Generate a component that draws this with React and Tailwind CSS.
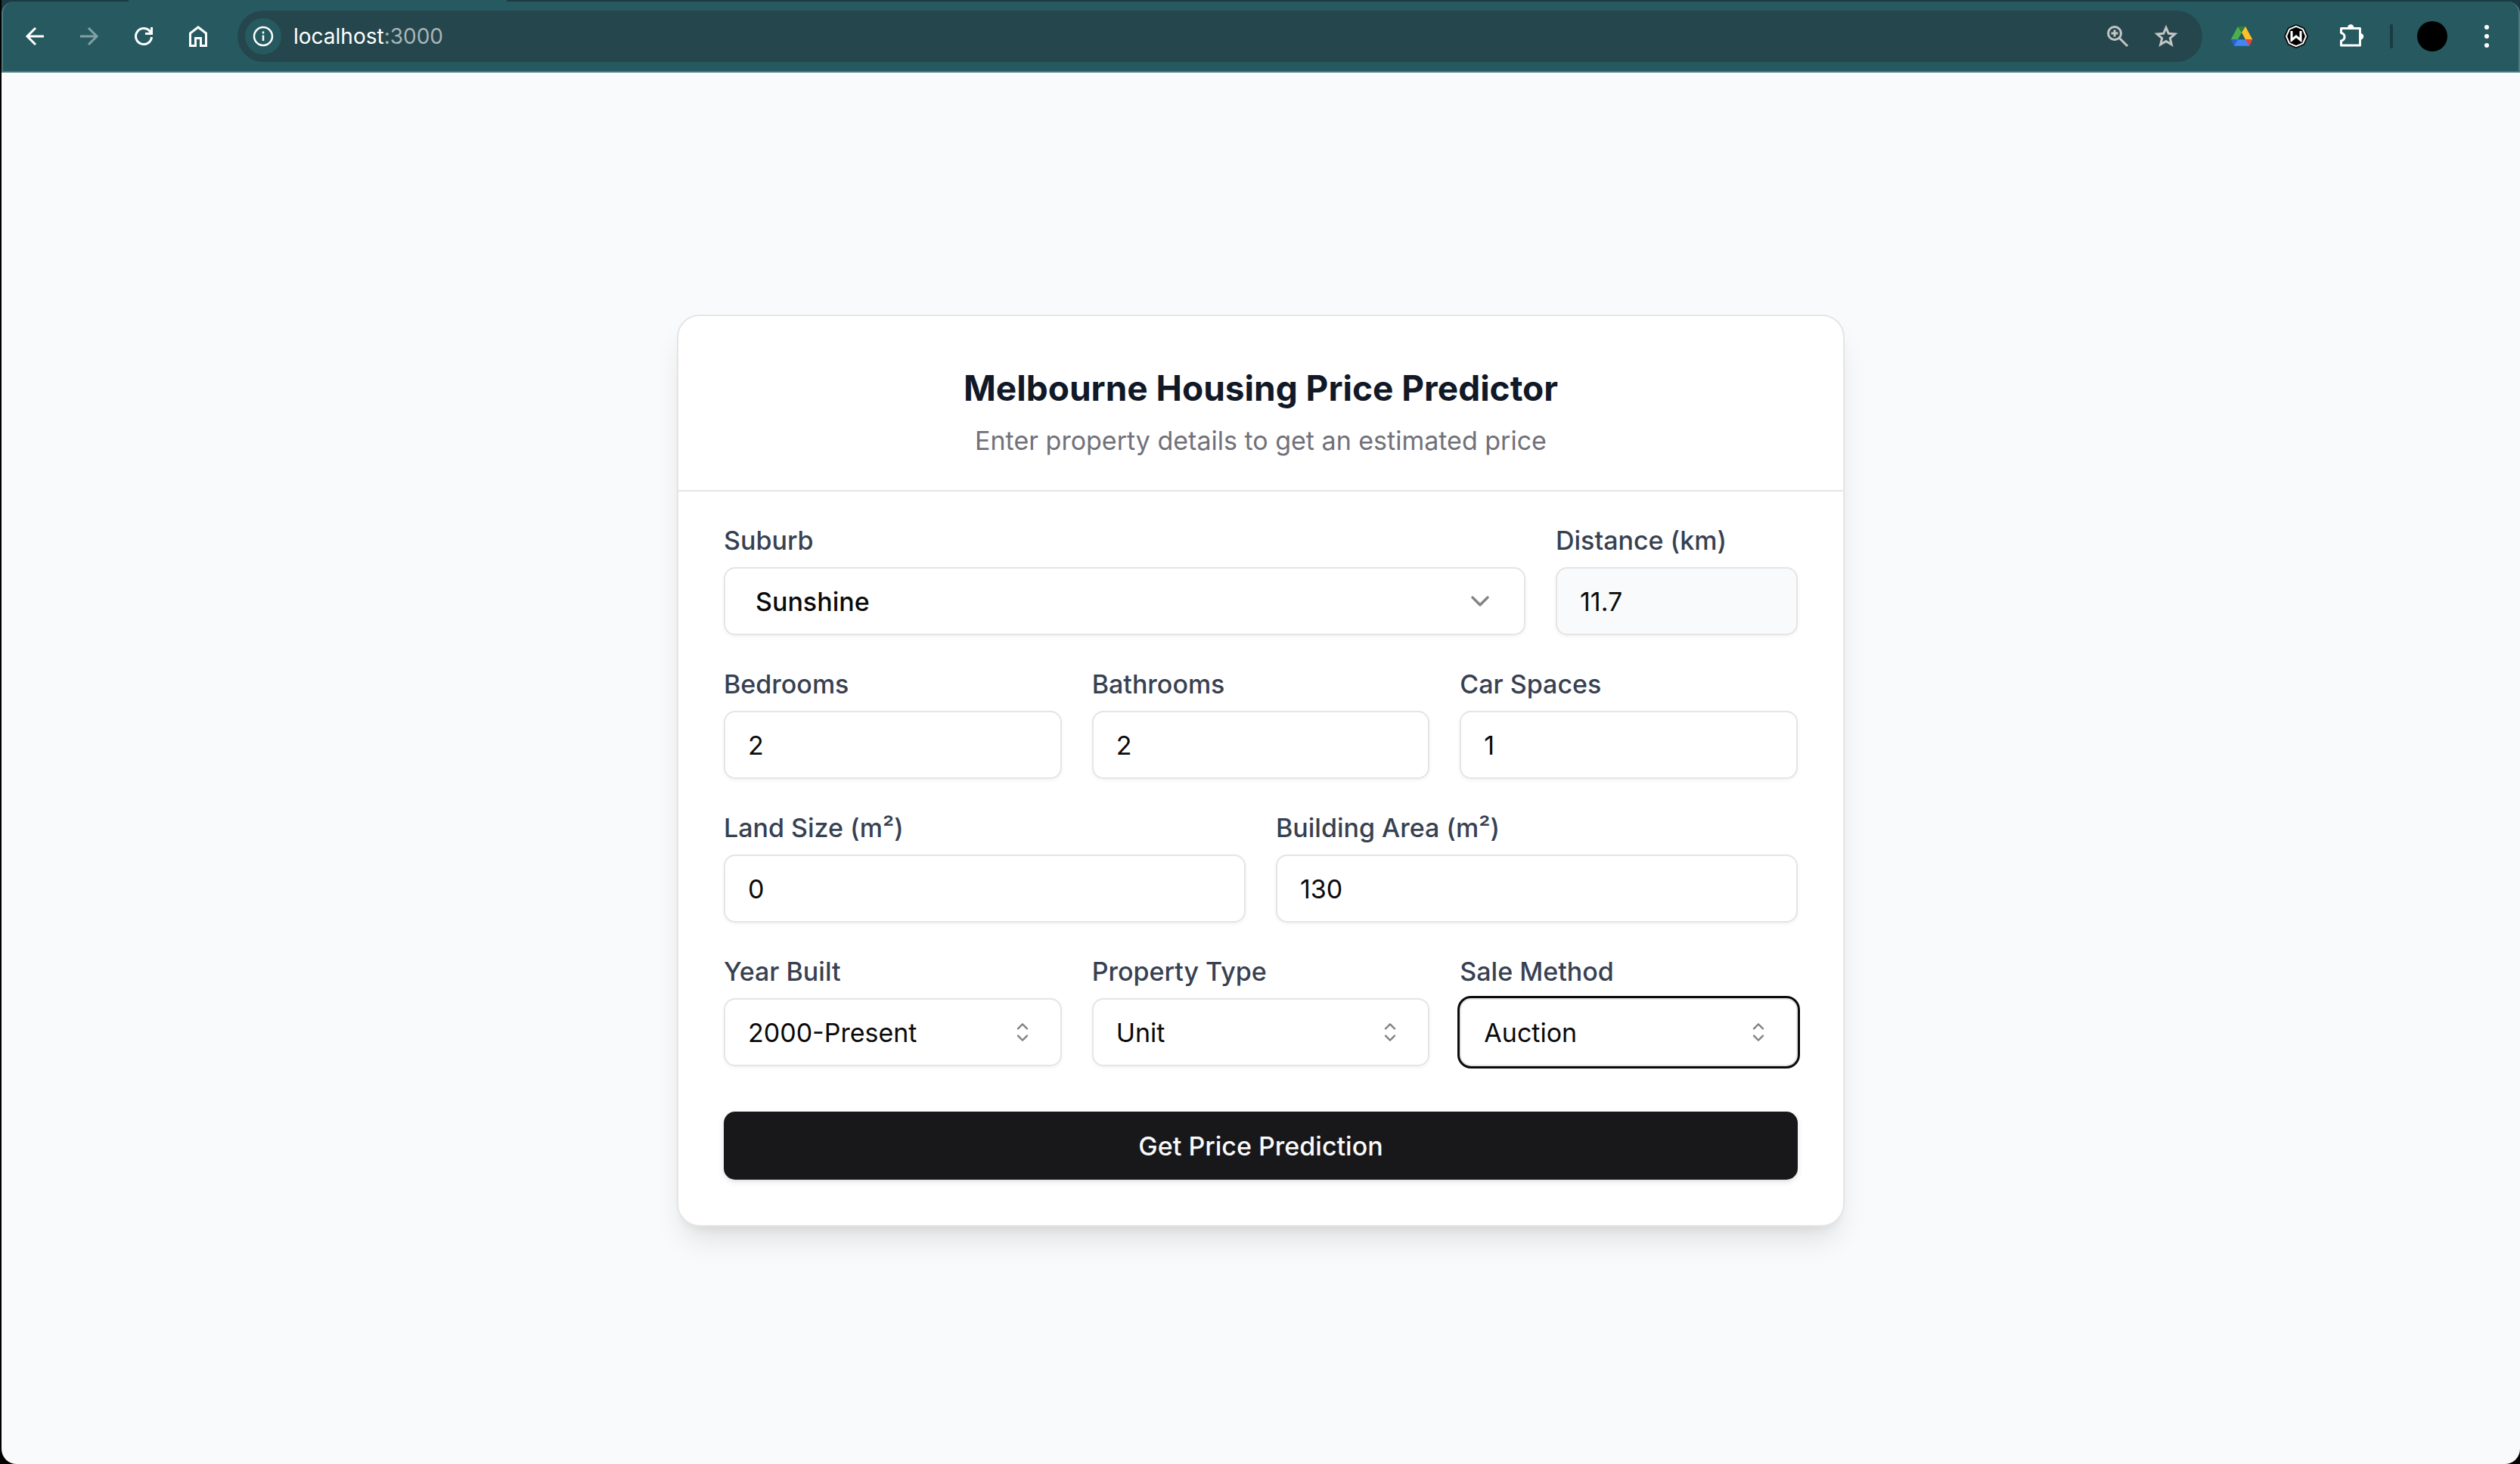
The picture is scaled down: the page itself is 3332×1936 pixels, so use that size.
import React from "react";
import { ChevronDown } from "lucide-react";

const caretPath =
  "M4.93179 5.43179C4.75605 5.60753 4.75605 5.89245 4.93179 6.06819C5.10753 6.24392 5.39245 6.24392 5.56819 6.06819L7.49999 4.13638L9.43179 6.06819C9.60753 6.24392 9.89245 6.24392 10.0682 6.06819C10.2439 5.89245 10.2439 5.60753 10.0682 5.43179L7.81819 3.18179C7.73379 3.0974 7.61933 3.04999 7.49999 3.04999C7.38064 3.04999 7.26618 3.0974 7.18179 3.18179L4.93179 5.43179ZM10.0682 9.56819C10.2439 9.39245 10.2439 9.10753 10.0682 8.93179C9.89245 8.75606 9.60753 8.75606 9.43179 8.93179L7.49999 10.8636L5.56819 8.93179C5.39245 8.75606 5.10753 8.75606 4.93179 8.93179C4.75605 9.10753 4.75605 9.39245 4.93179 9.56819L7.18179 11.8182C7.35753 11.9939 7.64245 11.9939 7.81819 11.8182L10.0682 9.56819Z";

function ToolButton({ label, className = "", children }) {
  return (
    <button type="button" aria-label={label} className={`flex size-9 shrink-0 items-center justify-center ${className}`}>
      {children}
    </button>
  );
}

function Toolbar() {
  return (
    <header className="bg-[#1b3a42]">
      <div className="h-0.5 px-40">
        <div className="ml-2 h-0.5 w-[500px] bg-[#265a60]" />
      </div>
      <div className="flex h-[94px] items-center rounded-t-2xl border-x-2 border-b-2 border-[#4f7a80] bg-[#265a60] px-6 text-white">
        <nav className="flex items-center gap-9">
          <ToolButton label="Back">
            <svg viewBox="0 0 36 36" className="size-9" fill="none" stroke="currentColor" strokeWidth="3">
              <path d="M30 18H8M19 7 8 18l11 11" />
            </svg>
          </ToolButton>
          <ToolButton label="Forward" className="text-[#82a1a5]">
            <svg viewBox="0 0 36 36" className="size-9" fill="none" stroke="currentColor" strokeWidth="3">
              <path d="M6 18h22M17 7l11 11-11 11" />
            </svg>
          </ToolButton>
          <ToolButton label="Reload">
            <svg viewBox="0 0 36 36" className="size-9" fill="none" stroke="currentColor" strokeWidth="3">
              <path d="M28.500 19a10.500 10.500 0 1 1-2.500-7.800l2 2.300" />
              <path d="M28.500 6v8.500H20" />
            </svg>
          </ToolButton>
          <ToolButton label="Home">
            <svg viewBox="0 0 36 36" className="size-9" fill="none" stroke="currentColor" strokeWidth="3">
              <path d="M7.500 14 18 6l10.500 8v16.500h-7v-10h-7v10h-7z" />
            </svg>
          </ToolButton>
        </nav>
        <div className="ml-[34px] flex h-[68px] min-w-0 flex-1 items-center rounded-full bg-[#24464c] pr-[30px] pl-2.5">
          <button type="button" aria-label="View site information" className="flex size-12 shrink-0 items-center justify-center rounded-full bg-[#265a60]">
            <svg viewBox="0 0 28 28" className="size-7" fill="none" stroke="currentColor" strokeWidth="2.500">
              <circle cx="14" cy="14" r="12" />
              <path d="M14 12.500v7.500M14 7.500v3" />
            </svg>
          </button>
          <span className="ml-4 flex-1 text-[28px] leading-9">
            localhost<span className="text-[#a7b5b8]">:3000</span>
          </span>
          <ToolButton label="Zoom" className="text-[#c4c4c4]">
            <svg viewBox="0 0 36 36" className="size-9" fill="none" stroke="currentColor" strokeWidth="3">
              <circle cx="14" cy="14" r="8.500" />
              <path d="m20 20 11 11M14 9.500v9M9.500 14h9" />
            </svg>
          </ToolButton>
          <ToolButton label="Bookmark this tab" className="ml-7 text-[#c4c4c4]">
            <svg viewBox="0 0 36 36" className="size-9" fill="none" stroke="currentColor" strokeWidth="3">
              <path d="m18 6.500 3.300 7.800 8.500.700-6.500 5.600 2 8.300L18 24.500l-7.300 4.400 2-8.300L6.200 15l8.500-.700z" />
            </svg>
          </ToolButton>
        </div>
        <div className="ml-[34px] flex shrink-0 items-center gap-9">
          <ToolButton label="Google Drive">
            <svg viewBox="0 0 36 36" className="size-9">
              <path fill="#4caf50" d="M13 5l5 8-5 9.300H3.700z" />
              <path fill="#2e7d32" d="M13 5h10l-5 8z" />
              <path fill="#fbc02d" d="M23 5l9.300 17.300H23L18 13z" />
              <path fill="#4285f4" d="M12.500 22.300H24l4.500 8.500H7.500z" />
              <path fill="#2962d9" d="M3.700 22.300h9.300l-5 8.500z" />
              <path fill="#ea4335" d="M23 22.300h9.300l-4 8.500z" />
            </svg>
          </ToolButton>
          <ToolButton label="Extension W">
            <svg viewBox="0 0 36 36" className="size-9">
              <path fill="#0a0a0a" d="m18 2 11 4.700L34 18l-5 11.300L18 34 7 29.300 2 18 7 6.700z" />
              <path fill="#000" stroke="#fff" strokeWidth="2" d="m18 4.800 9 3.900 4 9.300-4 9.300-9 3.900-9-3.900-4-9.300 4-9.300z" />
              <path fill="none" stroke="#fff" strokeWidth="3" d="M12 11v12l6-5 6 5V11" />
            </svg>
          </ToolButton>
          <ToolButton label="Extensions">
            <svg viewBox="0 0 36 36" className="size-9">
              <path
                fill="none"
                stroke="#fff"
                strokeWidth="3"
                strokeLinejoin="round"
                d="M5.500 7.500h25v22.500h-25v-6c6-1.500 6-9 0-10.500z"
              />
              <path fill="#fff" d="M14 6.500a4.200 4.200 0 0 1 8.400 0zM31 14a4.200 4.200 0 0 1 0 8.400z" />
            </svg>
          </ToolButton>
        </div>
        <div className="ml-[34px] h-8 w-1 shrink-0 rounded-full bg-[#1b3a42]" />
        <button type="button" aria-label="Profile" className="ml-8 size-10 shrink-0 rounded-full bg-black" />
        <ToolButton label="Menu" className="ml-[34px]">
          <svg viewBox="0 0 36 36" className="size-9" fill="currentColor">
            <circle cx="18" cy="6" r="3" />
            <circle cx="18" cy="18" r="3" />
            <circle cx="18" cy="30" r="3" />
          </svg>
        </ToolButton>
      </div>
    </header>
  );
}

const control =
  "block h-[90px] w-full appearance-none rounded-[15px] border-2 border-[#e5e5e5] text-[34px] text-[#0a0a0a] outline-none";

function Field({ id, label, className = "", children }) {
  return (
    <div className={`flex min-w-0 flex-col gap-2.5 ${className}`}>
      <label htmlFor={id} className="text-[34px] leading-[50px] font-medium text-[#374151]">
        {label}
      </label>
      {children}
    </div>
  );
}

function TextField({ id, label, value, className, fill = "bg-white" }) {
  return (
    <Field id={id} label={label} className={className}>
      <input
        id={id}
        type="text"
        inputMode="decimal"
        defaultValue={value}
        className={`${control} px-[30px] ${fill} shadow-[0_2px_5px_rgba(0,0,0,0.05)]`}
      />
    </Field>
  );
}

function SelectField({ id, label, value, ring = "shadow-[0_2px_5px_rgba(0,0,0,0.05)]" }) {
  return (
    <Field id={id} label={label}>
      <div className="relative">
        <select id={id} defaultValue={value} className={`${control} bg-white px-[30px] ${ring}`}>
          <option>{value}</option>
        </select>
        <svg viewBox="0 0 15 15" className="pointer-events-none absolute top-[25px] right-8 size-10 opacity-50" fill="#0a0a0a">
          <path d={caretPath} />
        </svg>
      </div>
    </Field>
  );
}

export default function App() {
  return (
    <div className="bg-black pl-0.5 font-['Inter',sans-serif]">
      <div className="flex min-h-screen flex-col rounded-b-[20px] bg-[#f9fafb]">
        <Toolbar />
        <main className="flex flex-1 items-center justify-center pt-1.5">
          <section className="w-full max-w-[1544px] rounded-[30px] border-2 border-[#e5e5e5] bg-white shadow-[0_25px_38px_-8px_rgba(0,0,0,0.1),0_10px_15px_-10px_rgba(0,0,0,0.1)]">
            <div className="flex flex-col items-center gap-2.5 border-b-2 border-[#e5e5e5] pt-[60px] pb-10 text-center">
              <h1 className="text-[46px] leading-[70px] font-bold text-[#111827]">Melbourne Housing Price Predictor</h1>
              <p className="text-[34px] leading-[50px] text-[#71717a]">Enter property details to get an estimated price</p>
            </div>
            <form className="flex flex-col gap-10 px-[60px] pt-10 pb-[60px]">
              <div className="flex gap-10">
                <Field id="suburb" label="Suburb" className="flex-1">
                  <div className="relative">
                    <select
                      id="suburb"
                      defaultValue="Sunshine"
                      className={`${control} bg-white px-10 font-medium shadow-[0_2px_5px_rgba(0,0,0,0.05)]`}
                    >
                      <option>Sunshine</option>
                    </select>
                    <ChevronDown className="pointer-events-none absolute top-[25px] right-10 size-10 text-[#0a0a0a] opacity-50" />
                  </div>
                </Field>
                <TextField id="distance" label="Distance (km)" value="11.7" className="w-80" fill="bg-[#f9fafb]" />
              </div>
              <div className="grid grid-cols-3 gap-10">
                <TextField id="bedrooms" label="Bedrooms" value="2" />
                <TextField id="bathrooms" label="Bathrooms" value="2" />
                <TextField id="car-spaces" label="Car Spaces" value="1" />
              </div>
              <div className="grid grid-cols-2 gap-10">
                <TextField id="land-size" label="Land Size (m²)" value="0" />
                <TextField id="building-area" label="Building Area (m²)" value="130" />
              </div>
              <div className="grid grid-cols-3 gap-10">
                <SelectField id="year-built" label="Year Built" value="2000-Present" />
                <SelectField id="property-type" label="Property Type" value="Unit" />
                <SelectField id="sale-method" label="Sale Method" value="Auction" ring="ring-3 ring-[#0a0a0a]" />
              </div>
              <button
                type="submit"
                className="mt-5 h-[90px] rounded-[15px] bg-[#18181b] text-[34px] font-medium text-[#fafafa] shadow-[0_3px_8px_rgba(0,0,0,0.1),0_3px_5px_-3px_rgba(0,0,0,0.1)]"
              >
                Get Price Prediction
              </button>
            </form>
          </section>
        </main>
      </div>
    </div>
  );
}
